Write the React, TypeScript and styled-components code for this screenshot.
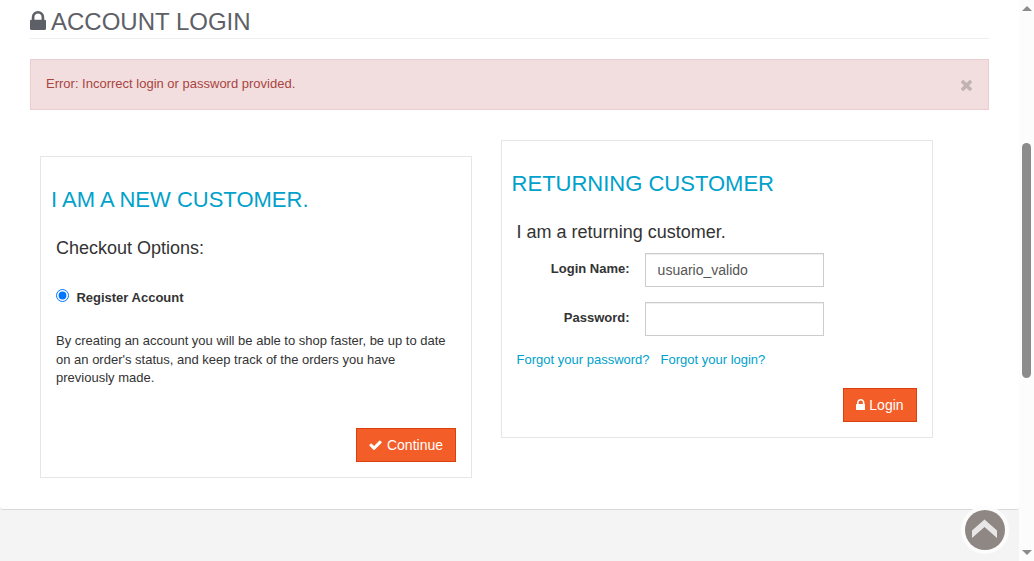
import React from "react";
import styled, { createGlobalStyle } from "styled-components";

const GlobalStyle = createGlobalStyle`
  *, *::before, *::after { box-sizing: border-box; }
  html, body { margin: 0; height: 100%; overflow: hidden; }
  body {
    background: #f4f4f4;
    color: #333;
    font: 13px/18.57px "Liberation Sans", Arial, sans-serif;
  }
  h1, h2, h3, p { margin: 0; font-weight: 400; }
`;

const Shell = styled.div`
  display: flex;
  width: 100%;
  height: 561px;
  overflow: hidden;
`;

const Page = styled.div`
  flex: 1;
  min-width: 0;
`;

const Content = styled.main`
  height: 510px;
  padding: 0 30px;
  background: #fff;
  border-bottom: 1px solid #d9d9d9;
  border-radius: 0 0 3px 3px;
`;

const PageTitle = styled.h1`
  display: flex;
  height: 39px;
  padding-top: 9px;
  border-bottom: 1px solid #eee;
  color: #5d6067;
  font-size: 24px;
  line-height: 26px;
  text-transform: uppercase;
`;

const Glyph = styled.svg<{ $w: number; $h: number; $top?: number; $gap?: number }>`
  flex: none;
  width: ${(p) => p.$w}px;
  height: ${(p) => p.$h}px;
  margin-top: ${(p) => p.$top ?? 0}px;
  margin-right: ${(p) => p.$gap ?? 0}px;
  fill: currentColor;
`;

const Alert = styled.div`
  display: flex;
  justify-content: space-between;
  height: 51px;
  margin-top: 20px;
  padding: 15px 16px 15px 15px;
  background: #f2dede;
  border: 1px solid #ebccd1;
  color: #a94442;
`;

const CloseButton = styled.button`
  display: flex;
  width: 11px;
  padding: 0;
  border: 0;
  background: none;
  color: #c2b2b2;
`;

const Columns = styled.div`
  display: flex;
  align-items: flex-start;
  gap: 28.6px;
  padding: 30px 10px 0;
`;

const Panel = styled.section<{ $height: number; $offset?: number }>`
  display: flex;
  flex-direction: column;
  width: 432px;
  height: ${(p) => p.$height}px;
  margin-top: ${(p) => p.$offset ?? 0}px;
  padding: 30px 15px 15px;
  border: 1px solid #e6e6e6;
`;

const PanelTitle = styled.h2`
  margin-left: -5px;
  color: #00a1cb;
  font-size: 22px;
  line-height: 26px;
  text-transform: uppercase;
  white-space: nowrap;
`;

const Subtitle = styled.h3`
  margin-top: 25px;
  font-size: 18px;
  line-height: 20px;
`;

const RadioLabel = styled.label`
  display: flex;
  margin-top: 31px;
  font-weight: 700;
  line-height: 18px;
`;

const Radio = styled.input`
  width: 13px;
  height: 13px;
  margin: 0 7.4px 0 0;
`;

const Description = styled.p`
  margin-top: 25px;
`;

const Button = styled.button`
  display: flex;
  align-self: flex-end;
  flex: none;
  height: 34px;
  margin-top: auto;
  padding: 6px 12px;
  background: #f35d28;
  border: 1px solid #d9400b;
  color: #fff;
  font: 14px/20px "Liberation Sans", Arial, sans-serif;
`;

const Field = styled.div`
  display: flex;
  margin-bottom: 15px;
`;

const Fields = styled.div`
  margin-top: 11px;
`;

const FieldLabel = styled.label`
  width: 128px;
  padding: 7px 15px 0 0;
  font-weight: 700;
  text-align: right;
`;

const Input = styled.input`
  width: 179px;
  height: 34px;
  padding: 6px 12px;
  border: 1px solid #ccc;
  border-radius: 0;
  outline: 0;
  background: #fff;
  box-shadow: inset 0 1px 1px rgba(0, 0, 0, 0.075);
  color: #555;
  font: 14px/20px "Liberation Sans", Arial, sans-serif;
`;

const Links = styled.div`
  display: flex;
  gap: 11px;
`;

const Link = styled.a`
  color: #00a1cb;
  text-decoration: none;
`;

const Scrollbar = styled.div`
  display: flex;
  flex-direction: column;
  align-items: center;
  width: 15px;
  height: 561px;
  padding: 6px 0;
  background: #fcfcfc;
`;

const Thumb = styled.div`
  width: 9px;
  height: 235px;
  margin-top: 132px;
  border-radius: 5px;
  background: #8b8b8b;
`;

const Arrow = styled.div<{ $down?: boolean }>`
  width: 0;
  height: 0;
  margin-top: ${(p) => (p.$down ? "auto" : 0)};
  border: 0 solid transparent;
  border-width: 0 5px;
  ${(p) => (p.$down ? "border-top" : "border-bottom")}: 5px solid #8b8b8b;
`;

const BackToTop = styled.a`
  position: fixed;
  right: 25px;
  bottom: 7px;
  width: 48px;
  height: 48px;
`;

const LOCK =
  "M640 768h512v-192q0-106-75-181t-181-75-181 75-75 181v192zm832 96v576q0 40-28 68t-68 28h-960q-40 0-68-28t-28-68v-576q0-40 28-68t68-28h32v-192q0-184 132-316t316-132 316 132 132 316v192h32q40 0 68 28t28 68z";
const CHECK =
  "M1671 566q0 40-28 68l-724 724-136 136q-28 28-68 28t-68-28l-136-136-362-362q-28-28-28-68t28-68l136-136q28-28 68-28t68 28l294 295 656-657q28-28 68-28t68 28l136 136q28 28 28 68z";
const TIMES =
  "M1490 1322q0 40-28 68l-136 136q-28 28-68 28t-68-28l-294-294-294 294q-28 28-68 28t-68-28l-136-136q-28-28-28-68t28-68l294-294-294-294q-28-28-28-68t28-68l136-136q28-28 68-28t68 28l294 294 294-294q28-28 68-28t68 28l136 136q28 28 28 68t-28 68l-294 294 294 294q28 28 28 68z";

export default function App() {
  return (
    <>
      <GlobalStyle />
      <Shell>
        <Page>
          <Content>
            <PageTitle>
              <Glyph $w={16} $h={19} $top={2} $gap={5} viewBox="320 128 1152 1408" preserveAspectRatio="none">
                <path d={LOCK} />
              </Glyph>
              Account Login
            </PageTitle>
            <Alert>
              <span>Error: Incorrect login or password provided.</span>
              <CloseButton aria-label="Close">
                <Glyph $w={11} $h={11} $top={5} viewBox="302 366 1188 1188">
                  <path d={TIMES} />
                </Glyph>
              </CloseButton>
            </Alert>
            <Columns>
              <Panel $height={322} $offset={16}>
                <PanelTitle>I am a new customer.</PanelTitle>
                <Subtitle>Checkout Options:</Subtitle>
                <RadioLabel>
                  <Radio type="radio" name="account" defaultChecked />
                  <span>Register Account</span>
                </RadioLabel>
                <Description>
                  By creating an account you will be able to shop faster, be up to date on an order's status, and
                  keep track of the orders you have previously made.
                </Description>
                <Button>
                  <Glyph $w={13} $h={10} $top={5} $gap={5} viewBox="121 270 1550 1252">
                    <path d={CHECK} />
                  </Glyph>
                  Continue
                </Button>
              </Panel>
              <Panel $height={298}>
                <PanelTitle>Returning Customer</PanelTitle>
                <Subtitle>I am a returning customer.</Subtitle>
                <Fields>
                  <Field>
                    <FieldLabel htmlFor="login">Login Name:</FieldLabel>
                    <Input id="login" defaultValue="usuario_valido" />
                  </Field>
                  <Field>
                    <FieldLabel htmlFor="password">Password:</FieldLabel>
                    <Input id="password" type="password" />
                  </Field>
                </Fields>
                <Links>
                  <Link href="#">Forgot your password?</Link>
                  <Link href="#">Forgot your login?</Link>
                </Links>
                <Button>
                  <Glyph $w={9.5} $h={11} $top={4} $gap={4} viewBox="320 128 1152 1408" preserveAspectRatio="none">
                    <path d={LOCK} />
                  </Glyph>
                  Login
                </Button>
              </Panel>
            </Columns>
          </Content>
        </Page>
        <Scrollbar>
          <Arrow />
          <Thumb />
          <Arrow $down />
        </Scrollbar>
      </Shell>
      <BackToTop href="#" aria-label="Back to top">
        <svg width="48" height="48" viewBox="0 0 48 48">
          <circle cx="24" cy="24" r="24" fill="#fcfcfc" />
          <circle cx="24" cy="24" r="20" fill="#8e8783" />
          <path d="M23.5 13.5L36 24.5V32L23.5 21L11 32V24.5Z" fill="#e9e6e8" />
        </svg>
      </BackToTop>
    </>
  );
}
